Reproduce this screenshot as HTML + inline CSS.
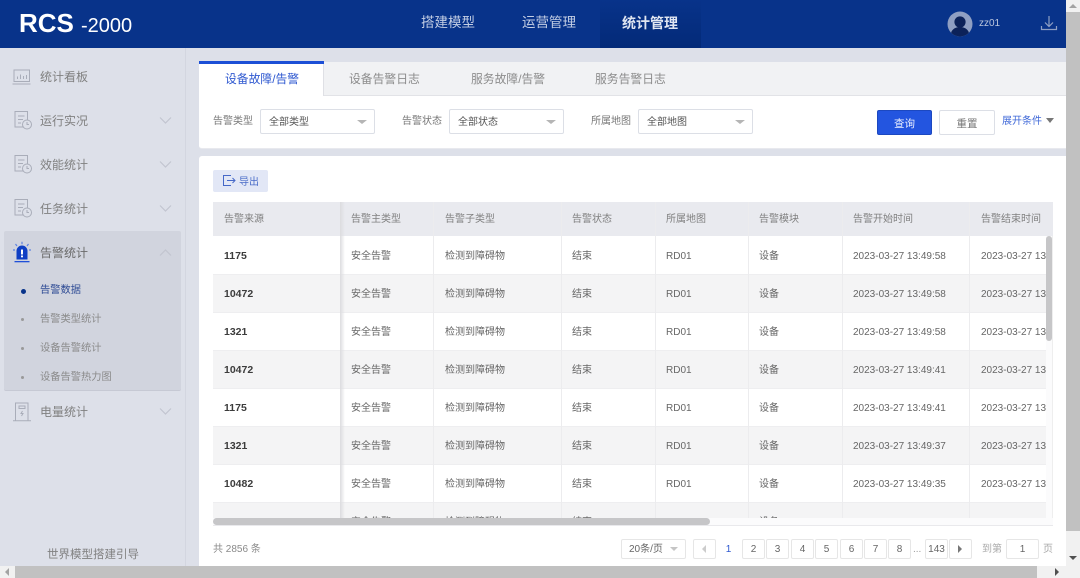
<!DOCTYPE html>
<html lang="zh"><head><meta charset="utf-8"><style>
*{box-sizing:border-box}
html,body{margin:0;padding:0;width:1080px;height:578px;overflow:hidden;background:#dde0e9;font-family:"Liberation Sans","Noto Sans CJK SC",sans-serif;color:#555}
.a{position:absolute;white-space:nowrap}
.t{position:absolute;white-space:nowrap;line-height:16px}
.menu{font-size:12px;color:#808080;left:40px}
.sub{font-size:10.25px;color:#8a8a8a;left:40px;margin-top:1px}
.dot{position:absolute;left:21px;width:3px;height:3px;border-radius:50%;background:#999}
.lab{font-size:10px;color:#777;margin-top:1px}
.sel{position:absolute;top:109px;height:25px;background:#fff;border:1px solid #dcdfe6;border-radius:2px;font-size:10px;color:#555;padding-left:8px;line-height:26px}
.sel i{position:absolute;right:7px;top:10px;width:0;height:0;border:5px solid transparent;border-top:4px solid #b5b5b5;border-bottom:0}
.tab{position:absolute;top:71px;font-size:11.8px;color:#8c8c8c;line-height:16px;white-space:nowrap}
.th{position:absolute;top:213px;font-size:10px;color:#808080;line-height:14px;white-space:nowrap}
.c{position:absolute;font-size:10px;color:#666;line-height:14px;white-space:nowrap;margin-top:2px}
.b{position:absolute;left:224px;font-size:10.5px;font-weight:bold;color:#3c3c3c;line-height:14px;margin-top:1px}
.pg{position:absolute;top:539px;width:23px;height:20px;background:#fff;border:1px solid #e6e6e6;border-radius:2px;font-size:10px;color:#666;text-align:center;line-height:19px}
.v{position:absolute;width:1px;background:#ececee}
</style></head><body>

<!-- header -->
<div class="a" style="left:0;top:0;width:1066px;height:48px;background:#08338a"></div>
<div class="a" style="left:600px;top:0;width:101px;height:48px;background:linear-gradient(#08338a,#032a78)"></div>
<div class="t" style="left:19px;top:9px;font-size:26px;line-height:28px;font-weight:bold;color:#fff">RCS</div>
<div class="t" style="left:81px;top:13px;font-size:20px;line-height:26px;color:#fff">-2000</div>
<div class="t" style="left:421px;top:14px;font-size:13.5px;line-height:18px;color:#c3cee4">搭建模型</div>
<div class="t" style="left:522px;top:14px;font-size:13.5px;line-height:18px;color:#c3cee4">运营管理</div>
<div class="t" style="left:622px;top:14px;font-size:14px;line-height:18px;font-weight:bold;color:#dfe5f1">统计管理</div>
<svg class="a" style="left:947px;top:11px" width="26" height="26" viewBox="0 0 26 26"><defs><clipPath id="av"><circle cx="13" cy="13" r="12.5"/></clipPath></defs><circle cx="13" cy="13" r="12.5" fill="#8f9fc2"/><g clip-path="url(#av)" fill="#0c2259"><circle cx="13" cy="11" r="5.6"/><ellipse cx="13" cy="23" rx="9" ry="7"/></g></svg>
<div class="t" style="left:979px;top:16px;font-size:10px;color:#bcc7de">zz01</div>
<svg class="a" style="left:1040px;top:14px" width="18" height="18" viewBox="0 0 18 18" fill="none" stroke="#8e9fc4" stroke-width="1.2"><path d="M9 2v10M5 8.5l4 4 4-4M1.5 12v3.500h15V12"/></svg>

<!-- sidebar -->
<div class="a" style="left:185px;top:48px;width:1px;height:518px;background:#d3d6e0"></div>
<div class="a" style="left:4px;top:231px;width:177px;height:160px;background:#d1d4de;border-bottom:1px solid #c6c9d4;border-radius:2px"></div>

<svg class="a" style="left:12px;top:68px" width="20" height="18" viewBox="0 0 20 18" fill="none" stroke="#a9adb9" stroke-width="1"><rect x="2" y="2" width="15.500" height="11.500"/><path d="M.5 16h18M5.500 11V8.500M8.500 11V6.500M11.500 11V8M14.500 11V7"/></svg>
<div class="t menu" style="top:69px">统计看板</div>

<svg class="a" style="left:13px;top:110px" width="20" height="20" viewBox="0 0 20 20" fill="none" stroke="#a9adb9" stroke-width="1"><path d="M10 17H2V1.500h12.500V10M5 6h6.500M5 9.500h5M5 13h3"/><circle cx="14" cy="14.500" r="4.500"/><path d="M14 12v2.500h2"/></svg>
<div class="t menu" style="top:113px">运行实况</div>
<svg class="a" style="left:159px;top:116px" width="13" height="9" viewBox="0 0 13 9" fill="none" stroke="#c2c5d0" stroke-width="1.200"><path d="M1 1.500l5.500 5.500L12 1.500"/></svg>

<svg class="a" style="left:13px;top:154px" width="20" height="20" viewBox="0 0 20 20" fill="none" stroke="#a9adb9" stroke-width="1"><path d="M10 17H2V1.500h12.500V10M5 6h6.500M5 9.500h5M5 13h3"/><circle cx="14" cy="14.500" r="4.500"/><path d="M14 12v2.500h2"/></svg>
<div class="t menu" style="top:157px">效能统计</div>
<svg class="a" style="left:159px;top:160px" width="13" height="9" viewBox="0 0 13 9" fill="none" stroke="#c2c5d0" stroke-width="1.200"><path d="M1 1.500l5.500 5.500L12 1.500"/></svg>

<svg class="a" style="left:13px;top:198px" width="20" height="20" viewBox="0 0 20 20" fill="none" stroke="#a9adb9" stroke-width="1"><path d="M10 17H2V1.500h12.500V10M5 6h6.500M5 9.500h5M5 13h3"/><circle cx="14" cy="14.500" r="4.500"/><path d="M14 12v2.500h2"/></svg>
<div class="t menu" style="top:201px">任务统计</div>
<svg class="a" style="left:159px;top:204px" width="13" height="9" viewBox="0 0 13 9" fill="none" stroke="#c2c5d0" stroke-width="1.200"><path d="M1 1.500l5.500 5.500L12 1.500"/></svg>

<svg class="a" style="left:12px;top:241px" width="20" height="22" viewBox="0 0 20 22"><path d="M4.500 18.500V10a5.500 5.500 0 0 1 11 0v8.500z" fill="#0f3fc4"/><rect x="2.500" y="20" width="15" height="1.300" fill="#1f4fd8"/><rect x="9" y="8.500" width="2" height="5" fill="#fff"/><rect x="9" y="14.500" width="2" height="1.800" fill="#fff"/><path d="M10 .8v2.500M3.500 3l1.500 2M16.500 3L15 5M1 9h2M17 9h2" stroke="#5f83e0" stroke-width="1.200"/></svg>
<div class="t menu" style="top:245px;color:#6a6a6a">告警统计</div>
<svg class="a" style="left:159px;top:248px" width="13" height="9" viewBox="0 0 13 9" fill="none" stroke="#c2c5d0" stroke-width="1.200"><path d="M1 7.500L6.500 2 12 7.500"/></svg>

<div class="dot" style="top:289px;width:5px;height:5px;left:20.500px;background:#08338a"></div>
<div class="t sub" style="top:282px;color:#2d4a94">告警数据</div>
<div class="dot" style="top:318px"></div><div class="t sub" style="top:311px">告警类型统计</div>
<div class="dot" style="top:347px"></div><div class="t sub" style="top:340px">设备告警统计</div>
<div class="dot" style="top:376px"></div><div class="t sub" style="top:369px">设备告警热力图</div>

<svg class="a" style="left:12px;top:401px" width="20" height="21" viewBox="0 0 20 21" fill="none" stroke="#a9adb9" stroke-width="1"><path d="M3.500 19.500V2h12.500v17.500M1 19.800h18M7 5h6v2.500H7zM10.500 10l-1.500 2.500h2L9.500 15"/></svg>
<div class="t menu" style="top:404px">电量统计</div>
<svg class="a" style="left:159px;top:407px" width="13" height="9" viewBox="0 0 13 9" fill="none" stroke="#c2c5d0" stroke-width="1.200"><path d="M1 1.500l5.500 5.500L12 1.500"/></svg>

<div class="t" style="left:47px;top:547px;font-size:11.500px;color:#808080">世界模型搭建引导</div>

<!-- tabs / filter panel -->
<div class="a" style="left:199px;top:62px;width:867px;height:87px;background:#fff;border-radius:3px 0 0 3px;border-bottom:1px solid #e8e9ee"></div>
<div class="a" style="left:324px;top:62px;width:742px;height:34px;background:#f1f2f4;border-bottom:1px solid #e2e3e7"></div>
<div class="a" style="left:199px;top:61px;width:125px;height:3px;background:#1c4fd6"></div>
<div class="a" style="left:323px;top:64px;width:1px;height:32px;background:#dfe0e5"></div>
<div class="tab" style="left:225px;color:#2f59d0">设备故障/告警</div>
<div class="tab" style="left:349px">设备告警日志</div>
<div class="tab" style="left:471px">服务故障/告警</div>
<div class="tab" style="left:595px">服务告警日志</div>

<div class="t lab" style="left:213px;top:113px">告警类型</div>
<div class="sel" style="left:260px;width:115px">全部类型<i></i></div>
<div class="t lab" style="left:402px;top:113px">告警状态</div>
<div class="sel" style="left:449px;width:115px;line-height:25px">全部状态<i></i></div>
<div class="t lab" style="left:591px;top:113px">所属地图</div>
<div class="sel" style="left:638px;width:115px">全部地图<i></i></div>

<div class="a" style="left:877px;top:110px;width:55px;height:25px;background:#2355e0;border:1px solid #1c48c0;border-radius:2px;color:#e8eeff;font-size:10.500px;text-align:center;line-height:26px">查询</div>
<div class="a" style="left:939px;top:110px;width:56px;height:25px;background:#fff;border:1px solid #dcdfe6;border-radius:2px;color:#777;font-size:10.500px;text-align:center;line-height:26px">重置</div>
<div class="t" style="left:1002px;top:114px;font-size:10px;color:#3f68d8">展开条件</div>
<div class="a" style="left:1046px;top:118px;width:0;height:0;border:4px solid transparent;border-top:5px solid #777;border-bottom:0"></div>

<!-- table panel -->
<div class="a" style="left:199px;top:156px;width:867px;height:410px;background:#fff;border-radius:3px 0 0 0"></div>
<div class="a" style="left:213px;top:170px;width:55px;height:22px;background:#e2e7f6;border-radius:2px"></div>
<svg class="a" style="left:222px;top:174px" width="14" height="13" viewBox="0 0 14 13" fill="none" stroke="#4568c8" stroke-width="1"><path d="M9 1.500H1.500v10H9M5 6.500h8M10.500 4l2.500 2.500L10.500 9"/></svg>
<div class="t" style="left:239px;top:176px;font-size:10px;line-height:14px;color:#4a6cc8">导出</div>

<!-- table -->
<div class="a" style="left:213px;top:202px;width:840px;height:323px;background:#fbfbfc;border-bottom:1px solid #e9e9ec;border-right:1px solid #eee"></div>
<div class="a" style="left:213px;top:202px;width:833px;height:34px;background:#e9eaef"></div>
<div class="a" style="left:1046px;top:202px;width:7px;height:34px;background:#e9eaef"></div>
<div class="a" style="left:213px;top:236px;width:833px;height:38px;background:#fff"></div>
<div class="a" style="left:213px;top:274px;width:833px;height:38px;background:#f4f4f5;border-top:1px solid #eeeef0"></div>
<div class="a" style="left:213px;top:312px;width:833px;height:38px;background:#fff;border-top:1px solid #eeeef0"></div>
<div class="a" style="left:213px;top:350px;width:833px;height:38px;background:#f4f4f5;border-top:1px solid #eeeef0"></div>
<div class="a" style="left:213px;top:388px;width:833px;height:38px;background:#fff;border-top:1px solid #eeeef0"></div>
<div class="a" style="left:213px;top:426px;width:833px;height:38px;background:#f4f4f5;border-top:1px solid #eeeef0"></div>
<div class="a" style="left:213px;top:464px;width:833px;height:38px;background:#fff;border-top:1px solid #eeeef0"></div>
<div class="a" style="left:213px;top:502px;width:833px;height:16px;background:#f4f4f5;border-top:1px solid #eeeef0"></div>
<div class="v" style="left:433px;top:202px;height:316px"></div>
<div class="v" style="left:561px;top:202px;height:316px"></div>
<div class="v" style="left:655px;top:202px;height:316px"></div>
<div class="v" style="left:748px;top:202px;height:316px"></div>
<div class="v" style="left:842px;top:202px;height:316px"></div>
<div class="v" style="left:969px;top:202px;height:316px"></div>
<div class="a" style="left:340px;top:202px;width:5px;height:316px;background:linear-gradient(90deg,#dcdcdf,rgba(230,230,233,0))"></div>

<div class="th" style="left:224px">告警来源</div><div class="th" style="left:351px">告警主类型</div><div class="th" style="left:445px">告警子类型</div><div class="th" style="left:572px">告警状态</div><div class="th" style="left:666px">所属地图</div><div class="th" style="left:759px">告警模块</div><div class="th" style="left:853px">告警开始时间</div><div class="th" style="left:981px">告警结束时间</div>

<div class="b" style="top:248px">1175</div><div class="c" style="left:351px;top:248px">安全告警</div><div class="c" style="left:445px;top:248px">检测到障碍物</div><div class="c" style="left:572px;top:248px">结束</div><div class="c" style="left:666px;top:248px">RD01</div><div class="c" style="left:759px;top:248px">设备</div><div class="c" style="left:853px;top:248px">2023-03-27 13:49:58</div>
<div class="b" style="top:286px">10472</div><div class="c" style="left:351px;top:286px">安全告警</div><div class="c" style="left:445px;top:286px">检测到障碍物</div><div class="c" style="left:572px;top:286px">结束</div><div class="c" style="left:666px;top:286px">RD01</div><div class="c" style="left:759px;top:286px">设备</div><div class="c" style="left:853px;top:286px">2023-03-27 13:49:58</div>
<div class="b" style="top:324px">1321</div><div class="c" style="left:351px;top:324px">安全告警</div><div class="c" style="left:445px;top:324px">检测到障碍物</div><div class="c" style="left:572px;top:324px">结束</div><div class="c" style="left:666px;top:324px">RD01</div><div class="c" style="left:759px;top:324px">设备</div><div class="c" style="left:853px;top:324px">2023-03-27 13:49:58</div>
<div class="b" style="top:362px">10472</div><div class="c" style="left:351px;top:362px">安全告警</div><div class="c" style="left:445px;top:362px">检测到障碍物</div><div class="c" style="left:572px;top:362px">结束</div><div class="c" style="left:666px;top:362px">RD01</div><div class="c" style="left:759px;top:362px">设备</div><div class="c" style="left:853px;top:362px">2023-03-27 13:49:41</div>
<div class="b" style="top:400px">1175</div><div class="c" style="left:351px;top:400px">安全告警</div><div class="c" style="left:445px;top:400px">检测到障碍物</div><div class="c" style="left:572px;top:400px">结束</div><div class="c" style="left:666px;top:400px">RD01</div><div class="c" style="left:759px;top:400px">设备</div><div class="c" style="left:853px;top:400px">2023-03-27 13:49:41</div>
<div class="b" style="top:438px">1321</div><div class="c" style="left:351px;top:438px">安全告警</div><div class="c" style="left:445px;top:438px">检测到障碍物</div><div class="c" style="left:572px;top:438px">结束</div><div class="c" style="left:666px;top:438px">RD01</div><div class="c" style="left:759px;top:438px">设备</div><div class="c" style="left:853px;top:438px">2023-03-27 13:49:37</div>
<div class="b" style="top:476px">10482</div><div class="c" style="left:351px;top:476px">安全告警</div><div class="c" style="left:445px;top:476px">检测到障碍物</div><div class="c" style="left:572px;top:476px">结束</div><div class="c" style="left:666px;top:476px">RD01</div><div class="c" style="left:759px;top:476px">设备</div><div class="c" style="left:853px;top:476px">2023-03-27 13:49:35</div>
<div class="b" style="top:514px">1086</div><div class="c" style="left:351px;top:514px">安全告警</div><div class="c" style="left:445px;top:514px">检测到障碍物</div><div class="c" style="left:572px;top:514px">结束</div><div class="c" style="left:666px;top:514px">RD01</div><div class="c" style="left:759px;top:514px">设备</div><div class="c" style="left:853px;top:514px">2023-03-27 13:49:34</div>

<div class="a" style="left:981px;top:236px;width:65px;height:289px;overflow:hidden">
<div class="c" style="left:0;top:12px">2023-03-27 13:49:58</div><div class="c" style="left:0;top:50px">2023-03-27 13:49:58</div><div class="c" style="left:0;top:88px">2023-03-27 13:49:58</div><div class="c" style="left:0;top:126px">2023-03-27 13:49:41</div><div class="c" style="left:0;top:164px">2023-03-27 13:49:41</div><div class="c" style="left:0;top:202px">2023-03-27 13:49:37</div><div class="c" style="left:0;top:240px">2023-03-27 13:49:35</div><div class="c" style="left:0;top:278px">2023-03-27 13:49:34</div>
</div>
<!-- mask clipped last row -->
<div class="a" style="left:213px;top:518px;width:840px;height:8px;background:#fbfbfc;border-bottom:1px solid #e9e9ec"></div>
<div class="a" style="left:199px;top:526px;width:867px;height:10px;background:#fff"></div>
<div class="a" style="left:213px;top:518px;width:497px;height:7px;background:#c6c6c8;border-radius:4px"></div>
<div class="a" style="left:1046px;top:236px;width:6px;height:105px;background:#c6c6c8;border-radius:3px"></div>

<!-- footer -->
<div class="t" style="left:213px;top:542px;font-size:10px;color:#8a8a8a">共 2856 条</div>
<div class="a" style="left:621px;top:539px;width:65px;height:20px;background:#fff;border:1px solid #e6e6e6;border-radius:2px;font-size:10px;color:#666;line-height:19px;padding-left:7px">20条/页</div>
<div class="a" style="left:670px;top:547px;width:0;height:0;border:4px solid transparent;border-top:4px solid #c5c5c5;border-bottom:0"></div>
<div class="pg" style="left:693px"></div>
<div class="a" style="left:702px;top:545px;width:0;height:0;border:4px solid transparent;border-right:4px solid #ccc;border-left:0"></div>
<div class="t" style="left:717px;top:542px;width:23px;text-align:center;font-size:10px;color:#2f59d0">1</div>
<div class="pg" style="left:742px">2</div><div class="pg" style="left:766px">3</div><div class="pg" style="left:791px">4</div><div class="pg" style="left:815px">5</div><div class="pg" style="left:840px">6</div><div class="pg" style="left:864px">7</div><div class="pg" style="left:888px">8</div>
<div class="t" style="left:913px;top:542px;font-size:10px;color:#999">...</div>
<div class="pg" style="left:925px">143</div>
<div class="pg" style="left:949px;width:23px"></div>
<div class="a" style="left:958px;top:545px;width:0;height:0;border:4px solid transparent;border-left:4px solid #777;border-right:0"></div>
<div class="t" style="left:982px;top:542px;font-size:10px;color:#aaa">到第</div>
<div class="pg" style="left:1006px;width:33px">1</div>
<div class="t" style="left:1043px;top:542px;font-size:10px;color:#aaa">页</div>

<!-- browser scrollbars -->
<div class="a" style="left:1066px;top:0;width:14px;height:578px;background:#f1f1f1"></div>
<div class="a" style="left:1066px;top:12px;width:14px;height:519px;background:#c1c1c1"></div>
<div class="a" style="left:1069px;top:4px;width:0;height:0;border:4px solid transparent;border-bottom:4px solid #a3a3a3;border-top:0"></div>
<div class="a" style="left:1069px;top:556px;width:0;height:0;border:4px solid transparent;border-top:4px solid #505050;border-bottom:0"></div>
<div class="a" style="left:0;top:566px;width:1080px;height:12px;background:#f1f1f1"></div>
<div class="a" style="left:15px;top:566px;width:1022px;height:12px;background:#c1c1c1"></div>
<div class="a" style="left:5px;top:568px;width:0;height:0;border:4px solid transparent;border-right:4px solid #a3a3a3;border-left:0"></div>
<div class="a" style="left:1055px;top:568px;width:0;height:0;border:4px solid transparent;border-left:4px solid #505050;border-right:0"></div>
</body></html>
